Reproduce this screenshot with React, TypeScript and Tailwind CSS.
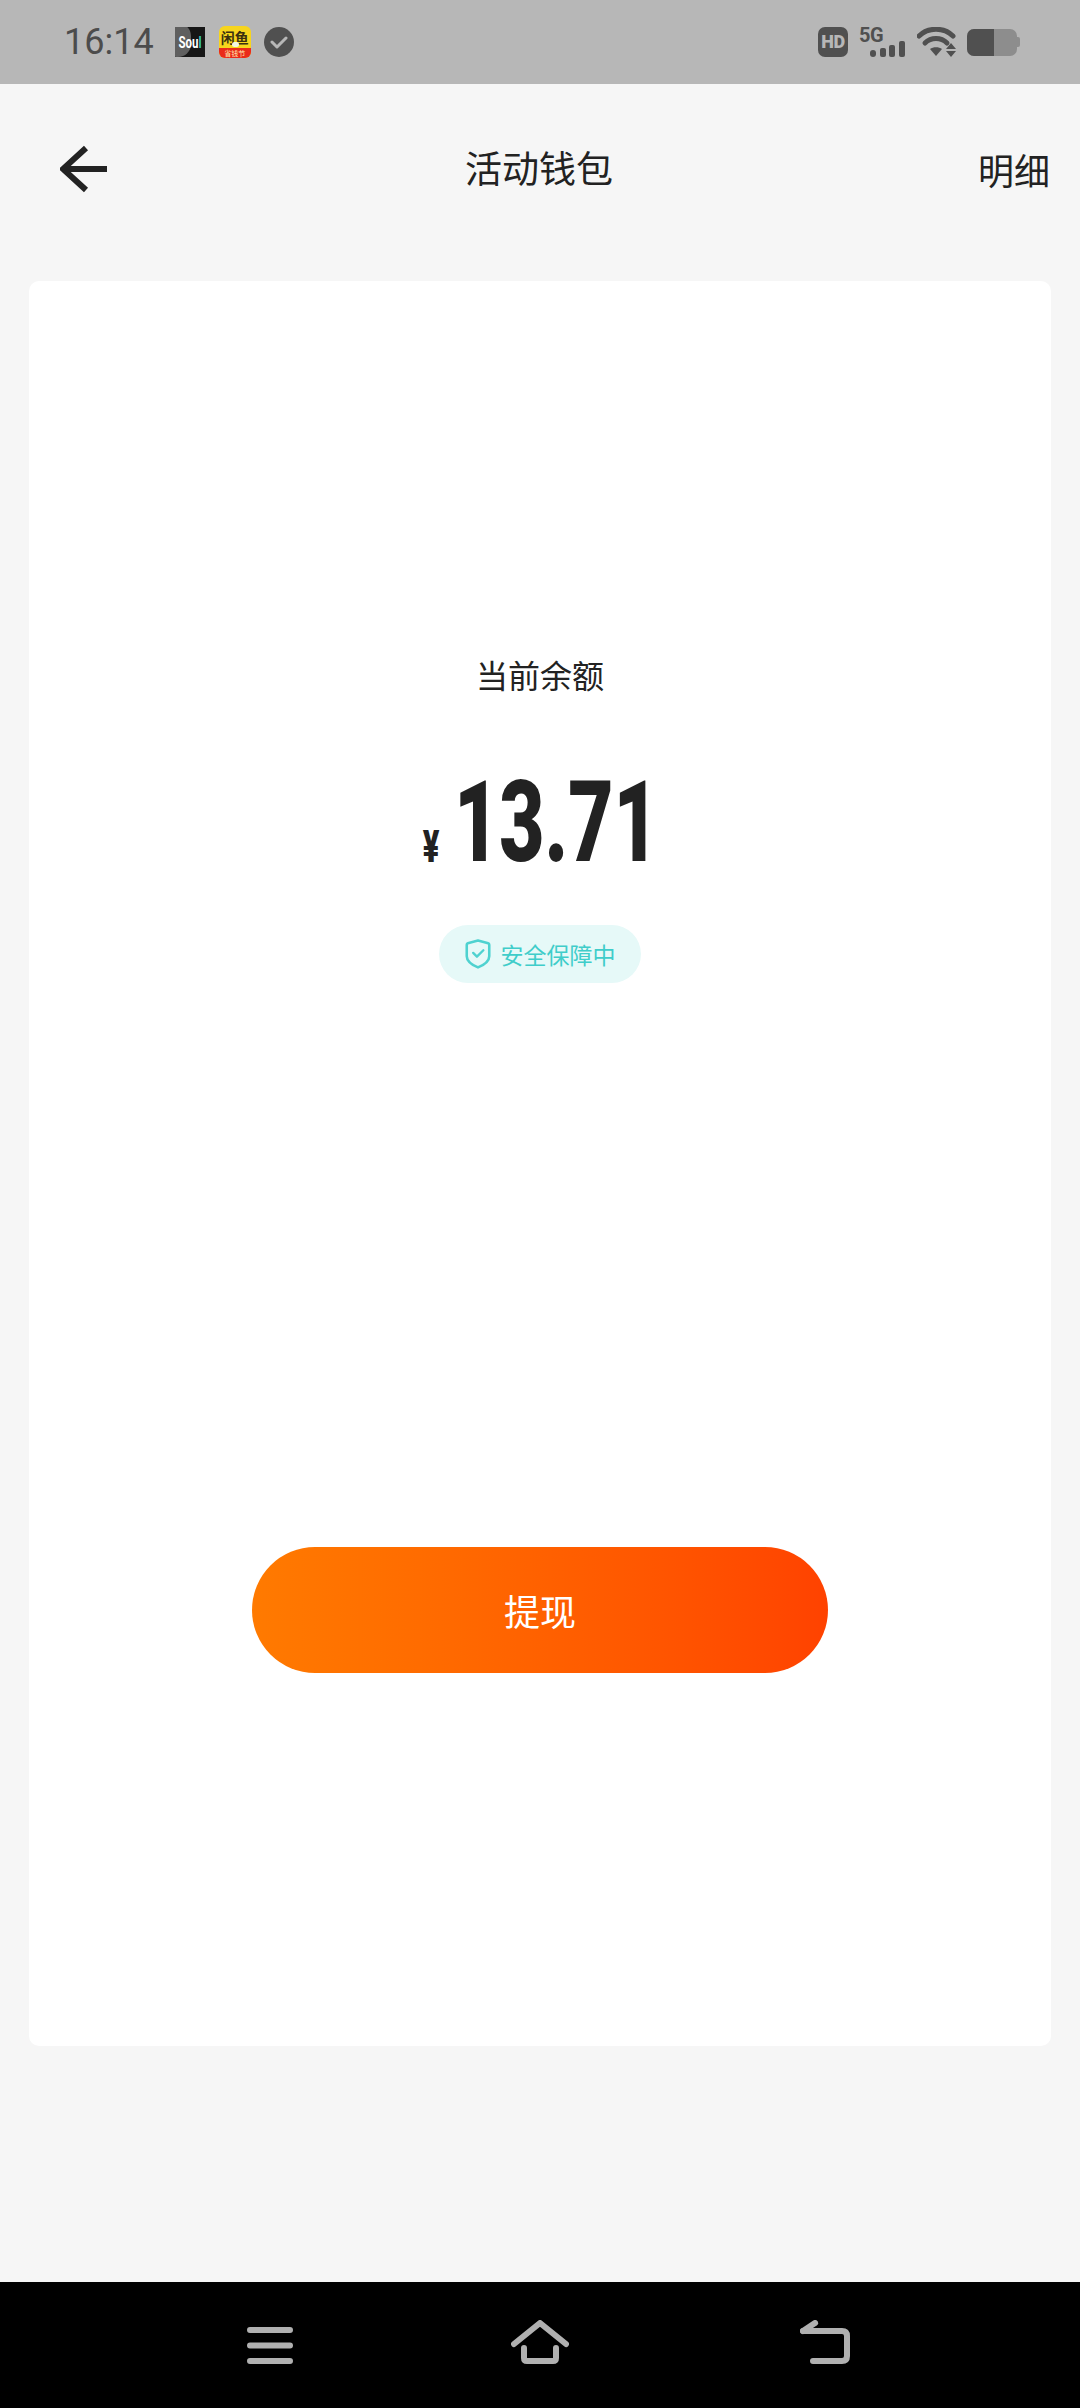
const CJK = "font-['Noto_Sans_CJK_SC','Noto_Sans',sans-serif]";

function AppIcons() {
  return (
    <div className="flex items-center ml-[21px]">
      <div className="relative w-[30px] h-[30px] bg-[#161616] overflow-hidden flex items-center justify-center">
        <div className="absolute -left-[10px] -top-[4px] w-[26px] h-[34px] rounded-full bg-[#5f5f5f]" />
        <span className="relative font-['Roboto',sans-serif] font-bold text-[16px] leading-none text-white scale-x-[0.72] translate-y-[1px] whitespace-nowrap">
          Sou<span className="text-[#35c9b4]">l</span>
        </span>
      </div>
      <div className="relative ml-[14px] w-[32px] h-[32px] rounded-[6px] overflow-hidden flex flex-col bg-[#f7d51d]">
        <div className={`${CJK} h-[22px] flex items-start justify-center pt-[4px] text-[14px] leading-none text-[#3a3010] font-bold whitespace-nowrap`}>
          闲鱼
        </div>
        <div className="absolute left-[13px] top-[16px] w-[7px] h-[5px] rounded-full bg-[#f4f7e0]" />
        <div className="flex-1 bg-[#ea2a1a] flex items-center justify-center text-[7px] leading-none text-[#ffe9b0] whitespace-nowrap">
          省钱节
        </div>
      </div>
      <div className="ml-[13px] w-[30px] h-[30px] rounded-full bg-[#505050] flex items-center justify-center">
        <svg width="18" height="14" viewBox="0 0 18 14" fill="none">
          <path d="M2 7l5 5 9-9" stroke="#b7b7b7" strokeWidth="3" strokeLinecap="round" strokeLinejoin="round" />
        </svg>
      </div>
    </div>
  );
}

function StatusIcons() {
  return (
    <div className="flex items-center">
      <div className="w-[30px] h-[30px] rounded-[7px] bg-[#505050] flex items-center justify-center font-['Roboto',sans-serif] font-black text-[18px] leading-none text-[#b7b7b7] tracking-[-0.5px]">
        HD
      </div>
      <div className="relative ml-[11px] w-[46px] h-[30px]">
        <span className="absolute left-0 -top-[1px] font-['Roboto',sans-serif] font-bold text-[20px] leading-[19px] text-[#505050] tracking-[-0.5px]">
          5G
        </span>
        <svg className="absolute right-0 bottom-0" width="35" height="16" viewBox="0 0 35 16" fill="#505050">
          <rect x="0" y="9" width="6" height="7" rx="3" />
          <rect x="10" y="7" width="6" height="9" rx="2" />
          <rect x="19" y="4" width="6" height="12" rx="2" />
          <rect x="29" y="0" width="6" height="16" rx="2" />
        </svg>
      </div>
      <svg className="ml-[12px]" width="40" height="30" viewBox="0 0 40 30" fill="none">
        <path d="M2 9C11 0 27 0 36 9" stroke="#505050" strokeWidth="5" strokeLinecap="round" />
        <path d="M8 16c6-6 16-6 22 0" stroke="#505050" strokeWidth="5" strokeLinecap="round" />
        <path d="M13 22c3-2.500 9-2.500 12 0l-6 7z" fill="#505050" />
        <path d="M34 16l5 6H29zM34 30l5-6H29z" fill="#505050" />
      </svg>
      <div className="ml-[10px] flex items-center">
        <div className="w-[50px] h-[27px] rounded-[7px] bg-[#8d8d8d] overflow-hidden">
          <div className="w-[27px] h-full bg-[#505050]" />
        </div>
        <div className="w-[3px] h-[10px] rounded-r-[2px] bg-[#8d8d8d]" />
      </div>
    </div>
  );
}

function ShieldIcon() {
  return (
    <svg width="26" height="30" viewBox="0 0 24 28" fill="none">
      <path
        d="M12 1.500l9.500 2.500q1 .3 1 1.300v10.700c0 4-3.500 7.500-10.500 10.500-7-3-10.500-6.500-10.500-10.500V5.300q0-1 1-1.300z"
        stroke="#4fd2d0"
        strokeWidth="2.400"
        strokeLinejoin="round"
      />
      <path d="M7.500 13l3.500 3.500 6-6" stroke="#4fd2d0" strokeWidth="2.200" strokeLinecap="round" strokeLinejoin="round" />
    </svg>
  );
}

export default function App() {
  return (
    <div className={`${CJK} w-[1080px] h-[2408px] bg-[#f6f6f6] flex flex-col text-[#222222]`}>
      <div className="h-[84px] bg-[#b7b7b7] flex items-center justify-between pl-[64px] pr-[60px]">
        <div className="flex items-center">
          <span className="font-['Roboto',sans-serif] text-[36px] leading-none text-[#4c4c4c]">16:14</span>
          <AppIcons />
        </div>
        <StatusIcons />
      </div>

      <div className="h-[197px] pb-[28px] pl-[60px] pr-[30px] grid grid-cols-3 items-center">
        <svg width="48" height="48" viewBox="0 0 48 48" fill="none">
          <path d="M47 24H3M26 3L3 24l23 21" stroke="#222222" strokeWidth="6" />
        </svg>
        <div className="text-[37px] leading-[50px] text-center whitespace-nowrap -translate-x-[16px] -translate-y-[2px]">活动钱包</div>
        <div className="text-[36px] leading-[50px] text-right">明细</div>
      </div>

      <div className="mx-[29px] h-[1765px] bg-white rounded-[10px] flex flex-col items-center pt-[369px]">
        <div className="text-[32px] leading-[48px]">当前余额</div>

        <div className="mt-[84px] h-[81px] flex items-end justify-center font-['Roboto',sans-serif] font-black">
          <span className="w-[18px] text-[44px] leading-[32px] scale-x-[0.7] flex justify-center">¥</span>
          <div className="ml-[14px] w-[204px] text-[114px] leading-[81px] whitespace-nowrap origin-left scale-x-[0.685]">13.71</div>
        </div>

        <div className="mt-[62px] w-[202px] h-[58px] rounded-full bg-[#e6f9f8] flex items-center justify-center gap-[10px]">
          <ShieldIcon />
          <span className="text-[23px] leading-none text-[#3fcdca] whitespace-nowrap">安全保障中</span>
        </div>

        <button className="mt-[564px] w-[576px] h-[126px] rounded-full bg-gradient-to-r from-[#ff7a00] to-[#ff4200] text-white text-[36px]">
          提现
        </button>
      </div>

      <div className="flex-1" />

      <div className="h-[126px] bg-black flex items-start pt-[38px] pl-[247px]">
        <svg width="46" height="44" viewBox="0 0 46 44" fill="none" className="mt-[7px]">
          <path d="M3 3h40M3 18.500h40M3 34h40" stroke="#b0b0b0" strokeWidth="6" strokeLinecap="round" />
        </svg>
        <svg width="58" height="44" viewBox="0 0 58 44" fill="none" className="ml-[218px]">
          <path d="M3 24L29 3l26 21" stroke="#b0b0b0" strokeWidth="6" strokeLinecap="round" strokeLinejoin="round" />
          <path d="M13 28v10q0 3 3 3h26q3 0 3-3V28" stroke="#b0b0b0" strokeWidth="6" strokeLinecap="round" />
        </svg>
        <svg width="50" height="44" viewBox="0 0 50 44" fill="none" className="ml-[231px]">
          <path d="M3 11h39q5 0 5 5v20q0 5-5 5H13" stroke="#b0b0b0" strokeWidth="6" strokeLinecap="round" />
          <path d="M3 11l12-8" stroke="#b0b0b0" strokeWidth="6" strokeLinecap="round" />
        </svg>
      </div>
    </div>
  );
}
